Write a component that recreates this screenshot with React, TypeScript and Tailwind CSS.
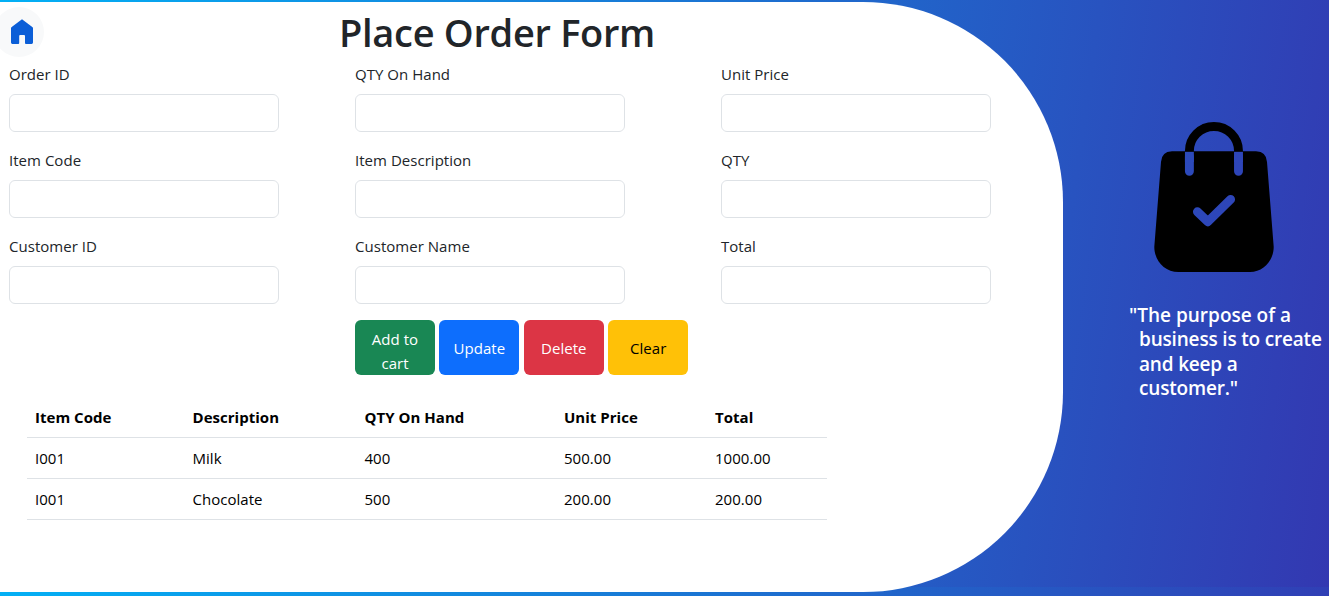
import React from "react";

const fieldRows = [
  ["Order ID", "QTY On Hand", "Unit Price"],
  ["Item Code", "Item Description", "QTY"],
  ["Customer ID", "Customer Name", "Total"],
];

const headers = ["Item Code", "Description", "QTY On Hand", "Unit Price", "Total"];

const orders = [
  ["I001", "Milk", "400", "500.00", "1000.00"],
  ["I001", "Chocolate", "500", "200.00", "200.00"],
];

const buttons = [
  { label: "Add to cart", style: "bg-[#198754] text-white pt-[7px]" },
  { label: "Update", style: "bg-[#0d6efd] text-white pt-px" },
  { label: "Delete", style: "bg-[#dc3545] text-white pt-px" },
  { label: "Clear", style: "bg-[#ffc107] text-black pt-px" },
];

function HomeIcon() {
  return (
    <svg viewBox="0 0 22 25" className="h-[25px] w-[22px]" fill="#0b5ed7">
      <path d="M11 0.2 L21.3 8 Q22 8.5 22 9.4 V23.6 Q22 25 20.6 25 H14.9 Q14 25 14 24.1 V16.9 Q14 16 13.1 16 H9.1 Q8.2 16 8.2 16.9 V24.1 Q8.2 25 7.3 25 H1.4 Q0 25 0 23.6 V9.4 Q0 8.5 0.7 8 Z" />
    </svg>
  );
}

function BagIcon() {
  return (
    <svg viewBox="0 0 150 150" className="h-[150px] w-[150px]">
      <mask id="bag-cutouts">
        <rect width="150" height="150" fill="white" />
        <g fill="none" stroke="black" strokeWidth="8.9" strokeLinecap="round" strokeLinejoin="round">
          <path d="M50.4 34.5V49.3M99.5 34.5V49.3" />
          <path d="M50.4 30V40M99.5 30V40" strokeLinecap="butt" />
          <path d="M58.4 89.7L68.9 99.7L91.6 77.4" />
        </g>
      </mask>
      <path
        mask="url(#bag-cutouts)"
        d="M33 29.3H117Q127.6 29.8 128 40L134.7 124.7C134.7 138.8 124.4 150 111 150H39.5C25.6 150 15.3 138.8 15.3 124.7L22 40Q22.4 29.8 33 29.3Z"
      />
      <path d="M50.4 29.3V29A24.55 24.55 0 0 1 99.5 29V29.3" fill="none" stroke="black" strokeWidth="8.9" />
    </svg>
  );
}

export default function App() {
  return (
    <div className="h-[596px] w-full overflow-hidden bg-[linear-gradient(98deg,#03b0f5_0%,#2853c0_78%,#3338b1_100%)] bg-[length:100%_587px] font-['Open_Sans','Noto_Sans',sans-serif] text-[15px] leading-6 tracking-[0.03px] text-[#212529]">
      <div className="flex h-full pt-[2px]">
        <main className="h-[590px] w-[1063px] shrink-0 overflow-hidden rounded-r-[200px] bg-white">
          <header className="flex h-[60px] pt-[5px]">
            <div className="-ml-[6px] flex size-[50px] shrink-0 items-start justify-center rounded-full bg-[#f8f9fa] pt-3 pl-[6px]">
              <HomeIcon />
            </div>
            <h1 className="ml-[295px] whitespace-nowrap text-[38px] font-semibold leading-[50px] tracking-[-0.3px]">
              Place Order Form
            </h1>
          </header>
          <form className="pl-[9px]">
            {fieldRows.map((row) => (
              <div key={row[0]} className="grid h-[86px] grid-cols-[346px_366px_270px]">
                {row.map((label) => (
                  <label key={label} className="block">
                    <span className="block h-8">{label}</span>
                    <input className="block h-[38px] w-[270px] rounded-md border border-[#dee2e6] bg-white px-3" />
                  </label>
                ))}
              </div>
            ))}
            <div className="ml-[346px] flex gap-[4.4px]">
              {buttons.map((b) => (
                <button
                  key={b.label}
                  type="button"
                  className={`flex h-[55px] w-20 items-center justify-center rounded-md px-3 ${b.style}`}
                >
                  {b.label}
                </button>
              ))}
            </div>
          </form>
          <table className="mt-[22px] ml-[27px] w-[800px] table-fixed border-collapse text-left text-black">
            <colgroup>
              <col className="w-[157.5px]" />
              <col className="w-[172px]" />
              <col className="w-[199.5px]" />
              <col className="w-[151px]" />
              <col className="w-[120px]" />
            </colgroup>
            <thead>
              <tr className="h-10 border-b border-[#dee2e6]">
                {headers.map((h) => (
                  <th key={h} className="px-2 py-0 font-bold">{h}</th>
                ))}
              </tr>
            </thead>
            <tbody>
              {orders.map((row) => (
                <tr key={row[1]} className="h-[41px] border-b border-[#dee2e6]">
                  {row.map((cell, i) => (
                    <td key={i} className="px-2 py-0">{cell}</td>
                  ))}
                </tr>
              ))}
            </tbody>
          </table>
        </main>
        <aside className="flex flex-1 flex-col pt-[120px] pl-[76px]">
          <BagIcon />
          <p className="mt-[31px] -indent-[10px] whitespace-nowrap text-[19px] font-semibold leading-[24.3px] tracking-[-0.18px] text-white">
            <span className="tracking-[0px]">"The purpose of a</span><br />
            business is to create<br />
            and keep a<br />
            customer."
          </p>
        </aside>
      </div>
    </div>
  );
}
